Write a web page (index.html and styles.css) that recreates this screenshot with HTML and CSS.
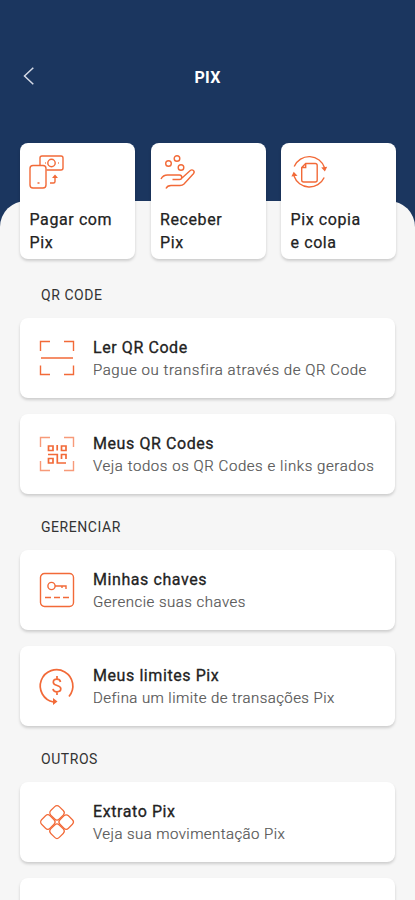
FILE: index.html
```html
<!DOCTYPE html>
<html lang="pt-BR">
<head>
<meta charset="utf-8">
<meta name="viewport" content="width=device-width, initial-scale=1">
<title>PIX</title>
<link rel="stylesheet" href="styles.css">
</head>
<body>
<div class="screen">
  <header class="header">
    <svg class="back" viewBox="0 0 12 20"><path d="M10.3 1.8 1.5 10l8.800 8.200"/></svg>
    <h1 class="title">PIX</h1>
  </header>
  <main class="sheet">
    <section class="actions">
      <a class="action">
        <svg class="icon" viewBox="1.5 0 36 36"><rect x="1.5" y="11.500" width="16" height="22.500" rx="3"/><path d="M11.500 11.500V4a2 2 0 0 1 2-2h19a2 2 0 0 1 2 2v10a2 2 0 0 1-2 2H18"/><circle cx="23" cy="9" r="3.700"/><path d="M16.500 9h.8M29.500 9h.8M9 29h2M21.500 29h3.500q1.500 0 1.500-1.500V22"/><path class="solid" d="m23.500 24 3-3.500 3 3.500z"/></svg>
        <span>Pagar com<br>Pix</span>
      </a>
      <a class="action">
        <svg class="icon" viewBox="0 0 36 36"><circle cx="8.500" cy="9.500" r="2.800"/><circle cx="17" cy="4.500" r="2.800"/><circle cx="21" cy="13.500" r="2.800"/><path d="M1 25c1.500-3 3.500-4 6.500-4h12c3 0 3 4.500 0 4.500h-7M22 24l8-7.300c2.500-2 5.500.4 3.400 3L24 30c-1.200 1.200-2 1.500-4 1.500H11c-2.500 0-4 .7-5 3"/></svg>
        <span>Receber<br>Pix</span>
      </a>
      <a class="action">
        <svg class="icon" viewBox="-.7 0 36 36"><path d="M2.500 12.500A16.300 16.300 0 0 1 33 14M32.500 23.500A16.300 16.300 0 0 1 2.300 22"/><path class="solid" d="m29.500 13.500 6-.8-2.300 4.800zM-.3 22.500l2.300-4.800 3.800 4z"/><path d="M14 9.500h9.500a2 2 0 0 1 2 2V26a2 2 0 0 1-2 2H12a2 2 0 0 1-2-2V13.500zM14 9.500v4h-4"/></svg>
        <span>Pix copia<br>e cola</span>
      </a>
    </section>

    <h2 class="group">QR CODE</h2>
    <section class="list">
      <a class="row">
        <svg class="icon" viewBox="0 0 36 36"><path d="M1.500 11V1.500H11M25 1.500h9.500V11M1.500 25.500v9H11M25 34.500h9.500v-9M2 18h32"/></svg>
        <div class="copy"><strong>Ler QR Code</strong><span class="wide">Pague ou transfira através de QR Code</span></div>
      </a>
      <a class="row">
        <svg class="icon" viewBox="0 0 36 36"><path class="pale" d="M1.500 11V1.500H11M25 1.500h9.500V11M1.500 25v9.500H11M25 34.500h9.500V25"/><path class="bold" d="M9.500 10h4.500v4.500H9.500zM22.500 10H27v4.500h-4.500zM9.500 22.500H14V27H9.500zM18.200 9v5.500M9 18.500h9.300V27H27M22.500 23v-4.500H27V23"/></svg>
        <div class="copy"><strong>Meus QR Codes</strong><span class="wide">Veja todos os QR Codes e links gerados</span></div>
      </a>
    </section>

    <h2 class="group">GERENCIAR</h2>
    <section class="list">
      <a class="row">
        <svg class="icon" viewBox="0 0 36 36"><rect x="1.500" y="1.500" width="33" height="33" rx="4"/><circle cx="12.500" cy="14" r="3.600"/><path d="M16 14h11v3M23 14v2M6 25.500h6M15 25.500h6M24 25.500h6"/></svg>
        <div class="copy"><strong>Minhas chaves</strong><span>Gerencie suas chaves</span></div>
      </a>
      <a class="row">
        <svg class="icon bold" viewBox="0 0 36 36"><path d="M30 28.500A16.300 16.300 0 1 0 14.500 34"/><path class="solid" d="m14 30 4.500 3.500L14 37z"/><path d="M21.500 14c-.4-2-1.700-2.800-3.600-2.800-2.200 0-3.600 1.200-3.600 3 0 4.200 7.500 2.500 7.500 6.600 0 1.900-1.600 3-3.900 3-2.200 0-3.600-1.100-3.900-3M18 8v2.700M18 24.200V27"/></svg>
        <div class="copy"><strong>Meus limites Pix</strong><span class="narrow">Defina um limite de transações Pix</span></div>
      </a>
    </section>

    <h2 class="group">OUTROS</h2>
    <section class="list">
      <a class="row">
        <svg class="icon thin" viewBox="0 0 36 36"><g transform="rotate(45 18 18)"><rect x="5.500" y="5.500" width="12" height="12" rx="3.200"/><rect x="18.500" y="5.500" width="12" height="12" rx="3.200"/><rect x="5.500" y="18.500" width="12" height="12" rx="3.200"/><rect x="18.500" y="18.500" width="12" height="12" rx="3.200"/></g></svg>
        <div class="copy"><strong>Extrato Pix</strong><span class="narrow">Veja sua movimentação Pix</span></div>
      </a>
      <a class="row"></a>
    </section>
  </main>
</div>
</body>
</html>
```
FILE: styles.css
```css
* { box-sizing: border-box; }
body { margin: 0; font-family: Roboto, "Liberation Sans", sans-serif; color: #222; }
.screen { height: 900px; overflow: hidden; background: #1b365f; }
.header { height: 201px; padding: 66px 23px 0; display: grid; grid-template-columns: 14px 1fr 14px; align-items: start; }
.back { width: 12px; height: 20px; fill: none; stroke: #d5dae6; stroke-width: 1.5; }
.title { margin: 2px 0 0; text-align: center; font-size: 16px; line-height: 20px; font-weight: 700; color: #fff; letter-spacing: .3px; }
.sheet { height: 800px; padding: 0 20px; background: #f6f6f6; border-radius: 26px 26px 0 0; }
.actions { display: grid; grid-template-columns: repeat(3, 115px); justify-content: space-between; width: 376px; height: 58px; }
.action { height: 116px; margin-top: -58px; padding: 11px 9.500px; background: #fff; border-radius: 8px; box-shadow: 0 2px 3px rgba(0,0,0,.17); font-size: 16px; line-height: 23.500px; font-weight: 400; letter-spacing: .6px; -webkit-text-stroke: .25px; }
.action span { display: block; margin-top: 17.500px; white-space: nowrap; }
.icon { display: block; width: 36px; height: 36px; fill: none; stroke: #f26a38; stroke-width: 1.400; flex: none; overflow: visible; }
.solid { fill: #f26a38; stroke: none; }
.pale { stroke: #f79a79; }
.thin { stroke-width: 1.200; }
.bold { stroke-width: 1.700; }
.group { margin: 0; padding: 26px 0 0 21px; height: 58.500px; font-size: 14px; line-height: 20px; font-weight: 400; letter-spacing: .55px; color: #333; }
.list { display: grid; gap: 15.500px; }
.list + .group { padding-top: 23px; height: 55.700px; }
.row { display: flex; align-items: center; gap: 18px; width: 375px; height: 80.500px; padding: 0 19px; background: #fff; border-radius: 8px; box-shadow: 0 2px 3px rgba(0,0,0,.17); }
.copy { display: grid; line-height: 23px; padding-top: 2px; white-space: nowrap; }
.copy strong { font-size: 16px; font-weight: 400; letter-spacing: .58px; -webkit-text-stroke: .3px; }
.copy span { font-size: 15px; font-weight: 300; letter-spacing: .5px; color: #555; -webkit-text-stroke: .2px; }
.copy .wide { letter-spacing: .57px; }
.copy .narrow { letter-spacing: .43px; }
```
